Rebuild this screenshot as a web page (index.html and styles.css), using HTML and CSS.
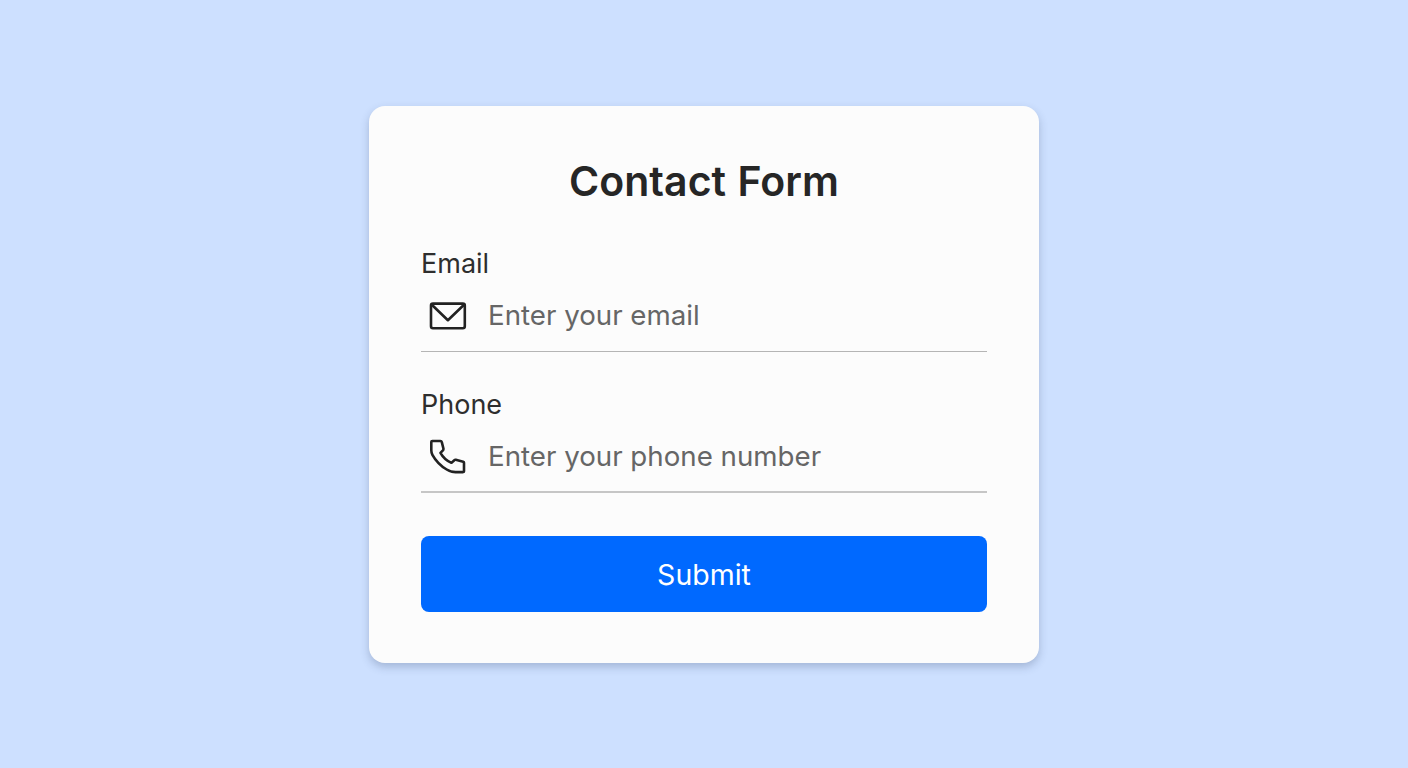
FILE: index.html
```html
<!DOCTYPE html>
<html lang="en">
<head>
    <meta charset="utf-8">
    <title>Contact Form</title>
    <link rel="stylesheet" href="styles.css">
</head>
<body>
    <form class="card">
        <h1 class="title">Contact Form</h1>
        <div class="field">
            <label class="label" for="email">Email</label>
            <div class="control">
                <svg class="icon" viewBox="0 0 38 38" aria-hidden="true">
                    <rect x="2" y="6.6" width="33.8" height="24.6" rx="2" />
                    <path d="M2.8 7.8 18.9 23.2 35 7.8" />
                </svg>
                <input class="input input-email" id="email" type="email" placeholder="Enter your email">
            </div>
        </div>
        <div class="field">
            <label class="label" for="phone">Phone</label>
            <div class="control control-phone">
                <svg class="icon" viewBox="0 0 38 38" aria-hidden="true">
                    <path d="M3.4 4H11.4Q12.5 4 12.8 5.1L14.4 11.5Q14.6 12.5 13.9 13.3L11.5 15.8C13.6 19.7 17.3 23.4 22 25.6Q22.6 25.9 23 25.4L25.3 23.2Q25.9 22.6 26.8 22.8L34.2 24.7Q35 24.9 35 25.8V34Q35 35.1 33.9 35.1H26.5Q21.8 35.1 17.7 32.5C11.5 28.8 6.7 23.7 3.4 17.8Q2.3 15.8 2.3 13.3V5.1Q2.3 4 3.4 4Z" />
                </svg>
                <input class="input" id="phone" type="tel" placeholder="Enter your phone number">
            </div>
        </div>
        <button class="submit" type="button">Submit</button>
    </form>
</body>
</html>
```

FILE: styles.css
```css
* {
    box-sizing: border-box;
}
body {
    display: flex;
    justify-content: center;
    align-items: center;
    height: 100vh;
    margin: 0;
    background: #cde0ff;
    font-family: Inter, sans-serif;
}
.card {
    width: 670px;
    height: 557px;
    padding: 50px 52px;
    border-radius: 16px;
    background: #fcfcfc;
    box-shadow: 0 4px 8px rgba(45, 60, 95, 0.25);
}
.title {
    margin: 0 0 40px;
    color: #262626;
    font-size: 41px;
    font-weight: 600;
    line-height: 50px;
    letter-spacing: 0.05px;
    word-spacing: 1px;
    text-align: center;
}
.field {
    height: 106px;
    margin-bottom: 35px;
}
.label {
    display: block;
    color: #2e2e2e;
    font-size: 27px;
    line-height: 35px;
}
.control {
    display: flex;
    align-items: center;
    gap: 21px;
    height: 71px;
    padding-left: 8px;
    border-bottom: 1px solid #b5b5b5;
}
.control-phone {
    padding-bottom: 1px;
    border-bottom: 2px solid #c6c6c6;
}
.icon {
    flex: none;
    width: 38px;
    height: 38px;
    fill: none;
    stroke: #222;
    stroke-width: 2.6;
    stroke-linejoin: round;
    stroke-linecap: round;
}
.input {
    flex: 1;
    min-width: 0;
    padding: 0;
    border: 0;
    outline: 0;
    background: none;
    color: #2e2e2e;
    font: 27.7px Inter, sans-serif;
}
.input-email {
    padding-bottom: 2px;
}
.input::placeholder {
    color: #666;
}
.submit {
    display: block;
    width: 100%;
    height: 76px;
    margin-top: 43px;
    padding: 2px 0 0;
    border: 0;
    border-radius: 8px;
    background: #0069ff;
    color: #fff;
    font: 400 28.5px Inter, sans-serif;
}
```
